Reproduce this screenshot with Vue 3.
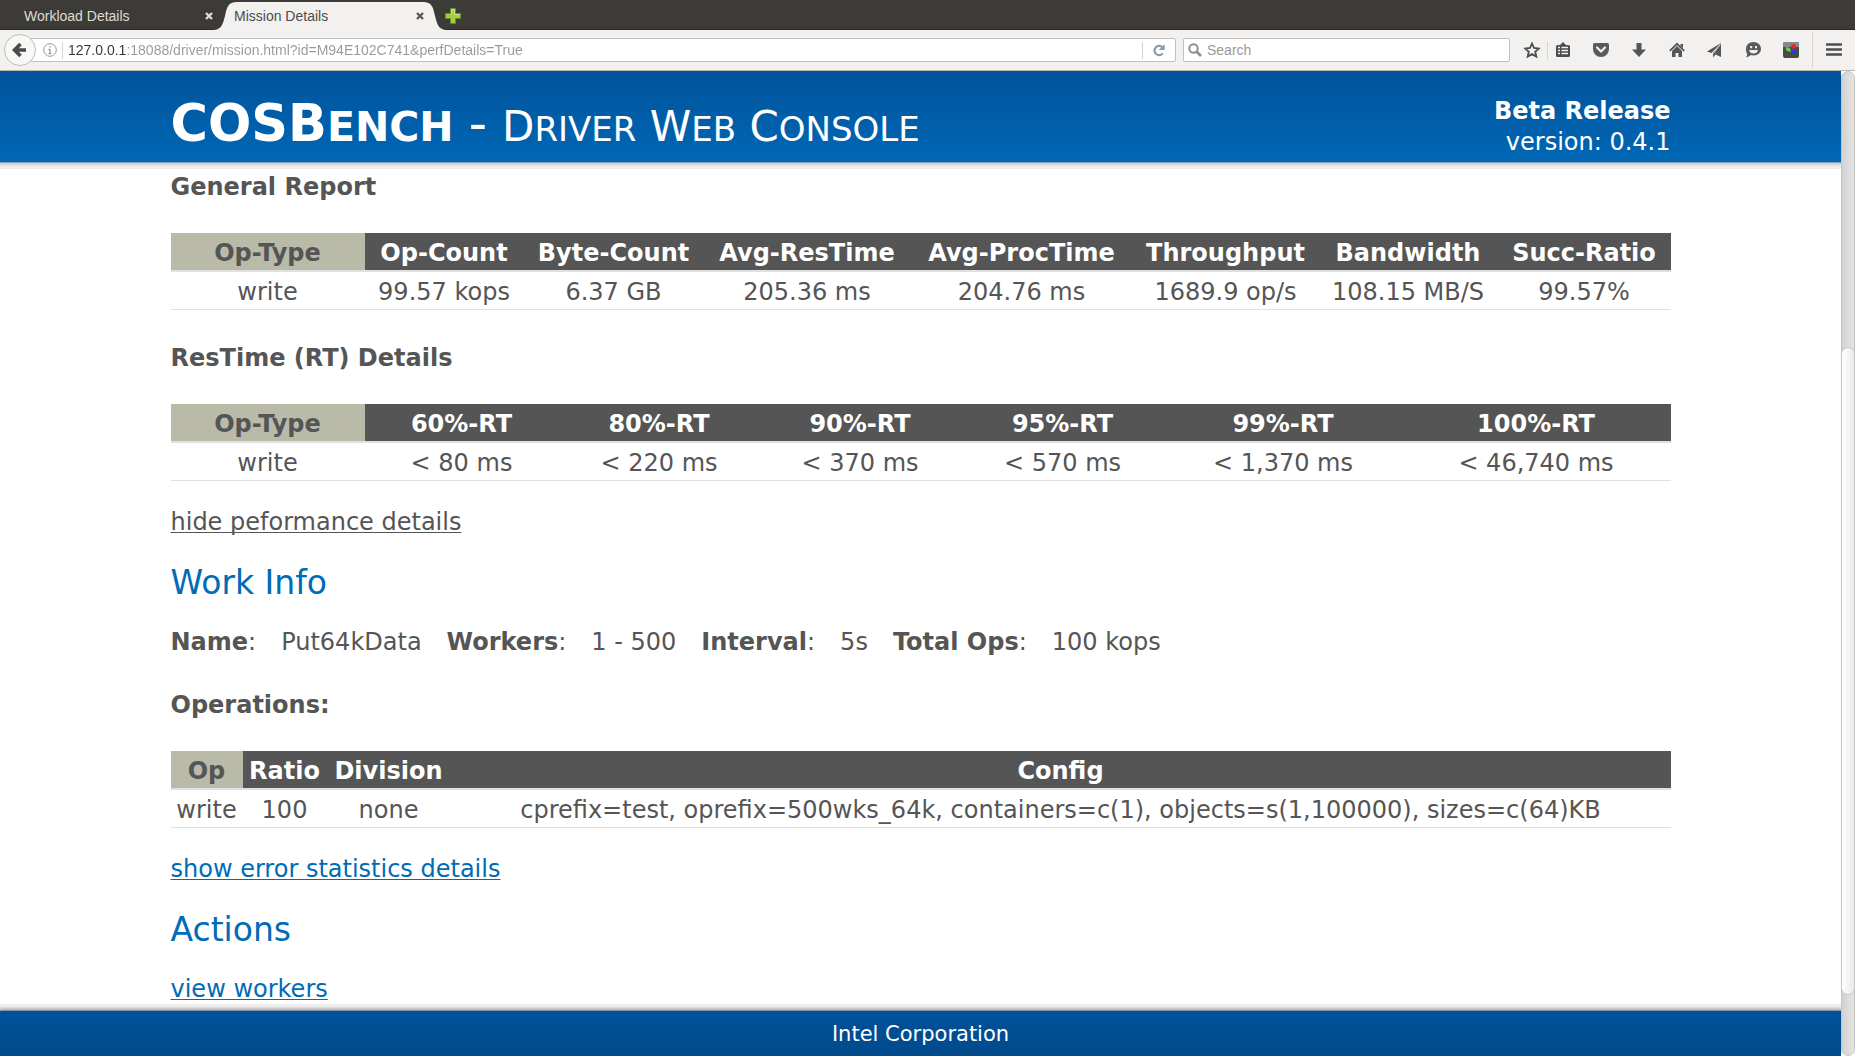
<script setup>
import { ref } from 'vue'

const address = ref('127.0.0.1:18088/driver/mission.html?id=M94E102C741&perfDetails=True')
const query = ref('')

const reports = [
  {
    title: 'General Report',
    widths: [194, 159, 180, 207, 222, 186, 179, 173],
    heads: ['Op-Type', 'Op-Count', 'Byte-Count', 'Avg-ResTime', 'Avg-ProcTime', 'Throughput', 'Bandwidth', 'Succ-Ratio'],
    cells: ['write', '99.57 kops', '6.37 GB', '205.36 ms', '204.76 ms', '1689.9 op/s', '108.15 MB/S', '99.57%'],
  },
  {
    title: 'ResTime (RT) Details',
    widths: [194, 194, 201, 201, 204, 237, 269],
    heads: ['Op-Type', '60%-RT', '80%-RT', '90%-RT', '95%-RT', '99%-RT', '100%-RT'],
    cells: ['write', '< 80 ms', '< 220 ms', '< 370 ms', '< 570 ms', '< 1,370 ms', '< 46,740 ms'],
  },
]

const operations = {
  widths: [72, 84, 124, 1220],
  heads: ['Op', 'Ratio', 'Division', 'Config'],
  cells: ['write', '100', 'none', 'cprefix=test, oprefix=500wks_64k, containers=c(1), objects=s(1,100000), sizes=c(64)KB'],
}

const facts = [
  ['Name', 'Put64kData'],
  ['Workers', '1 - 500'],
  ['Interval', '5s'],
  ['Total Ops', '100 kops'],
]

const share = (w) => ({ width: (w / 15) + '%' })
</script>

<template>
  <div class="window">
    <nav class="tabs" aria-label="Tabs">
      <div class="tab">
        <span class="tab-label">Workload Details</span>
        <button class="close" aria-label="Close tab">
          <svg width="8" height="8" viewBox="0 0 8 8"><path d="M1 1l6 6M7 1l-6 6" stroke="#dfdbd2" stroke-width="2.4" /></svg>
        </button>
      </div>
      <div class="tab active">
        <svg class="tab-shape" width="234" height="28" viewBox="0 0 234 28">
          <path d="M0 28C9 28 10 21 12 14C14 5 15 0 24 0H210C219 0 220 5 222 14C224 21 225 28 234 28Z" fill="#f2f1f0" />
        </svg>
        <span class="tab-label">Mission Details</span>
        <button class="close" aria-label="Close tab">
          <svg width="8" height="8" viewBox="0 0 8 8"><path d="M1 1l6 6M7 1l-6 6" stroke="#5c5b58" stroke-width="2.4" /></svg>
        </button>
      </div>
      <button class="new-tab" aria-label="New tab">
        <svg width="16" height="16" viewBox="0 0 16 16">
          <path d="M5.5 .5h5v5h5v5h-5v5h-5v-5h-5v-5h5z" fill="#a9cc3c" stroke="#5f8f2b" />
          <path d="M6.5 6.5v-5h3v5h5" fill="none" stroke="#d3e590" />
        </svg>
      </button>
    </nav>

    <div class="toolbar">
      <button class="back" aria-label="Back">
        <svg width="16" height="16" viewBox="0 0 16 16"><path d="M8.500 2L2.500 8l6 6M3.500 8H14" fill="none" stroke="#4a4a4a" stroke-width="3.600" /></svg>
      </button>
      <div class="address">
        <svg width="14" height="14" viewBox="0 0 14 14">
          <circle cx="7" cy="7" r="6.300" fill="none" stroke="#999" />
          <path d="M7 3v1.600M7 6v5M5.500 6.500H7M5.500 10.700h3" stroke="#999" stroke-width="1.300" />
        </svg>
        <i class="bar"></i>
        <input v-model="address" class="url" aria-label="Address" spellcheck="false" />
        <i class="bar"></i>
        <button class="reload" aria-label="Reload">
          <svg width="14" height="14" viewBox="0 0 14 14">
            <path d="M10.300 4.200A4.600 4.600 0 1 0 10.700 10.400" fill="none" stroke="#8b9aa8" stroke-width="2.200" />
            <path d="M12.600 1.200V7H6.800z" fill="#8b9aa8" />
          </svg>
        </button>
      </div>
      <div class="search">
        <svg width="14" height="14" viewBox="0 0 14 14">
          <circle cx="5.500" cy="5.500" r="4.200" fill="none" stroke="#8e8e8e" stroke-width="2" />
          <path d="M8.500 8.500l4.500 4.500" stroke="#8e8e8e" stroke-width="2.600" />
        </svg>
        <input v-model="query" aria-label="Search" placeholder="Search" />
      </div>
      <div class="tools">
        <button class="tool narrow" aria-label="Bookmark this page">
          <svg width="16" height="16" viewBox="0 0 16 16"><path d="M8 1.500l2 4.500 4.900.500-3.700 3.300 1.100 4.800L8 12.100l-4.300 2.500 1.100-4.800L1.100 6.500 6 6z" fill="none" stroke="#4d4d4d" stroke-width="1.800" /></svg>
        </button>
        <i class="bar"></i>
        <button class="tool narrow list" aria-label="Bookmarks">
          <svg width="16" height="16" viewBox="0 0 16 16">
            <path d="M1 4.500Q1 3 2.500 3H5l3-3 3 3h2.500Q15 3 15 4.500v9Q15 15 13.500 15h-11Q1 15 1 13.500z" fill="#4d4d4d" />
            <path d="M3 5.500h2M3 8.500h2M3 11.500h2M6.500 5.500H13M6.500 8.500H13M6.500 11.500H13" stroke="#f2f1f0" stroke-width="1.700" />
          </svg>
        </button>
        <button class="tool" aria-label="Pocket">
          <svg width="16" height="16" viewBox="0 0 16 16">
            <path d="M1.500 1h13Q16 1 16 2.500V7A8 8 0 0 1 0 7V2.500Q0 1 1.500 1z" fill="#5a5a5a" />
            <path d="M4 5.500l4 4 4-4" fill="none" stroke="#f2f1f0" stroke-width="2.200" stroke-linecap="round" stroke-linejoin="round" />
          </svg>
        </button>
        <button class="tool" aria-label="Downloads">
          <svg width="16" height="16" viewBox="0 0 16 16"><path d="M5.500 1h5v6.500H15L8 15 1 7.500h4.500z" fill="#555" /></svg>
        </button>
        <button class="tool" aria-label="Home">
          <svg width="16" height="16" viewBox="0 0 16 16">
            <path d="M.8 8.800L8 1.800l7.200 7" fill="none" stroke="#555" stroke-width="1.800" />
            <path d="M11.500 2H14v4l-2.500-2z" fill="#555" />
            <path d="M3 9l5-5 5 5v6H9.500v-4h-3v4H3z" fill="#555" />
          </svg>
        </button>
        <button class="tool" aria-label="Share">
          <svg width="16" height="16" viewBox="0 0 16 16">
            <path d="M14 1L0 9.500l4.500 1.500zM14 1L6 11v4.500l2.500-3L14 15z" fill="#555" />
            <path d="M13.500 2L6.500 11.500" stroke="#f2f1f0" stroke-width=".8" />
          </svg>
        </button>
        <button class="tool" aria-label="Chat">
          <svg width="16" height="16" viewBox="0 0 16 16">
            <path d="M8.500 0C13 0 16 3 16 6.800S13 13.500 8.500 13.500c-1 0-2 0-2.800-.4C4.500 14.500 3 15.200.8 15.200c1.200-1 1.500-2 1.400-3.400C1.200 10.500 1 9 1 7 1 3 4 0 8.500 0z" fill="#5a5a5a" />
            <path d="M5.200 4h2v2.200h-2zM10 4h2v2.200h-2z" fill="#f2f1f0" />
            <path d="M4 8h9Q12 11.500 8.500 11.500T4 8z" fill="#f2f1f0" />
          </svg>
        </button>
        <button class="tool" aria-label="Color add-on">
          <svg width="16" height="16" viewBox="0 0 16 16">
            <rect width="16" height="16" rx="2" fill="#4a4a4a" />
            <path d="M0 2Q0 0 2 0h12q2 0 2 2v3H0z" fill="#888" />
            <path d="M8 3l4-1 1 4-4 1z" fill="#f02020" />
            <path d="M3 5l4 1 1 4-4-1-1-1z" fill="#5ad04a" />
            <path d="M8 8l5-1v5l-4 0z" fill="#1f3cf0" />
          </svg>
        </button>
        <i class="bar tall"></i>
        <button class="tool menu" aria-label="Menu">
          <svg width="16" height="16" viewBox="0 0 16 16"><path d="M1 2.500h14M1 7.500h14M1 12.500h14" stroke="#4d4d4d" stroke-width="2.600" stroke-linecap="round" /></svg>
        </button>
      </div>
    </div>

    <div class="viewport">
      <div class="page">
        <header class="banner">
          <div class="wrap banner-row">
            <h1 class="title">
              <strong>COSB<span class="brand-caps">ENCH</span></strong>
              <span>-</span>
              <span class="sub">D<span class="caps">RIVER</span> W<span class="caps">EB</span> C<span class="caps">ONSOLE</span></span>
            </h1>
            <div class="version">
              <strong>Beta Release</strong><br />version: 0.4.1
            </div>
          </div>
        </header>

        <main class="wrap content">
          <section v-for="r in reports" :key="r.title">
            <h4>{{ r.title }}</h4>
            <table>
              <colgroup><col v-for="(w, i) in r.widths" :key="i" :style="share(w)" /></colgroup>
              <thead><tr><th v-for="h in r.heads" :key="h" scope="col">{{ h }}</th></tr></thead>
              <tbody><tr><td v-for="(c, i) in r.cells" :key="i">{{ c }}</td></tr></tbody>
            </table>
          </section>
          <p class="more"><a href="#" class="visited">hide peformance details</a></p>

          <h3>Work Info</h3>
          <p class="facts">
            <span v-for="[k, v] in facts" :key="k" class="fact"><span><strong>{{ k }}</strong>:</span><span>{{ v }}</span></span>
          </p>
          <h4>Operations:</h4>
          <table>
            <colgroup><col v-for="(w, i) in operations.widths" :key="i" :style="share(w)" /></colgroup>
            <thead><tr><th v-for="h in operations.heads" :key="h" scope="col">{{ h }}</th></tr></thead>
            <tbody><tr><td v-for="(c, i) in operations.cells" :key="i">{{ c }}</td></tr></tbody>
          </table>
          <p class="more"><a href="#">show error statistics details</a></p>

          <h3>Actions</h3>
          <p><a href="#">view workers</a></p>
        </main>

        <footer class="footer">Intel Corporation</footer>
      </div>
      <div class="scrollbar"><div class="thumb"></div></div>
    </div>
  </div>
</template>

<style>
body {
  margin: 0;
  background: #fff;
}
</style>

<style scoped>
.window {
  display: flex;
  flex-direction: column;
  min-height: 100vh;
  font-family: Verdana, "DejaVu Sans", sans-serif;
  font-size: 24px;
  line-height: 30px;
  color: #555;
}
button {
  display: flex;
  align-items: center;
  justify-content: center;
  margin: 0;
  padding: 0;
  border: 0;
  background: none;
}
input {
  min-width: 0;
  flex: 1;
  padding: 0;
  border: 0;
  outline: 0;
  background: none;
  font: 14px/20px "Liberation Sans", Arial, sans-serif;
}
svg {
  display: block;
  flex: none;
}

/* Tab strip */
.tabs {
  display: flex;
  height: 28px;
  padding-top: 2px;
  background: #3c3b37;
  box-shadow: inset 0 -1px #2b2a27;
  font: 14px/28px "Liberation Sans", Arial, sans-serif;
}
.tab {
  position: relative;
  display: flex;
  align-items: center;
  justify-content: space-between;
  box-sizing: border-box;
  width: 213px;
  padding-left: 24px;
  color: #dfdbd2;
}
.tab.active {
  width: 234px;
  padding: 0 23px 0 21px;
  color: #4c4c4c;
}
.tab-shape {
  position: absolute;
  left: 0;
  top: 0;
}
.tab-label,
.close {
  position: relative;
}
.new-tab {
  margin-left: -2px;
}

/* Navigation toolbar */
.toolbar {
  display: flex;
  align-items: center;
  height: 40px;
  border-bottom: 1px solid #bab8b4;
  background: #f2f1f0;
}
.back {
  z-index: 1;
  box-sizing: border-box;
  width: 32px;
  height: 32px;
  margin-left: 4px;
  border: 1px solid #bfbcb8;
  border-radius: 50%;
  background: #f8f8f7;
}
.address,
.search {
  display: flex;
  align-items: center;
  box-sizing: border-box;
  height: 24px;
  border: 1px solid #c4c0bb;
  border-radius: 2px;
  background: #fff;
}
.address {
  flex: 1;
  margin-left: -6px;
  padding-left: 12px;
}
.bar {
  width: 1px;
  height: 17px;
  margin: 0 5px;
  background: #d5d3d0;
}
.url {
  background: linear-gradient(90deg, #333 59px, #999 59px);
  -webkit-background-clip: text;
  background-clip: text;
  color: transparent;
}
.reload {
  width: 22px;
  margin-right: 5px;
}
.search {
  width: 327px;
  margin-left: 7px;
  padding-left: 4px;
  gap: 5px;
}
.search input::placeholder {
  color: #999;
  opacity: 1;
}
.tools {
  display: flex;
  align-items: center;
  margin-left: 7px;
}
.tools .bar {
  margin: 0;
}
.tools .tall {
  height: 36px;
  margin-left: 2px;
}
.tool {
  width: 38px;
  height: 30px;
}
.tool.narrow {
  width: 30px;
}
.tool.list {
  margin-right: 4px;
}
.tool.menu {
  width: 42px;
}

/* Page */
.viewport {
  display: flex;
  flex: 1;
}
.page {
  display: flex;
  flex: 1;
  flex-direction: column;
  min-width: 0;
}
.wrap {
  box-sizing: border-box;
  width: 100%;
  max-width: 1500px;
  margin: 0 auto;
}
.banner {
  padding: 25px 0 4px;
  background: linear-gradient(#00539b, #0067b5);
  box-shadow: 0 1px #7f9fbc, 0 3px 2px #ccc, 0 7px #eee;
  color: #fff;
}
.banner-row {
  display: flex;
  justify-content: space-between;
}
.title {
  display: flex;
  align-items: baseline;
  gap: 15px;
  margin: 0;
  font-size: 51px;
  font-weight: 400;
  line-height: 56px;
}
.brand-caps {
  font-size: 41px;
}
.sub {
  font-size: 42px;
}
.caps {
  font-size: 34px;
}
.version {
  line-height: 31px;
  text-align: right;
}
.content {
  padding: 10px 0 7px;
}
h4 {
  margin: 33px 0 31px;
  font-size: 24px;
  line-height: 30px;
}
section:first-child h4 {
  margin-top: 0;
}
h3 {
  margin: 26px 0 24px;
  color: #006bb6;
  font-size: 33px;
  font-weight: 400;
  line-height: 40px;
}
p {
  margin: 0;
}
.more {
  margin-top: 26px;
}
a {
  color: #006bb6;
  text-decoration: underline 1px;
  text-decoration-skip-ink: none;
  text-underline-offset: 2px;
}
a.visited {
  color: #555;
}
.facts,
.fact {
  display: flex;
  gap: 25px;
}
table {
  width: 100%;
  border-spacing: 0;
  table-layout: fixed;
}
th,
td {
  padding: 5px 0 2px;
  text-align: center;
  white-space: nowrap;
}
th {
  border-bottom: 2px solid #e0e0e0;
  background: #555;
  background-clip: padding-box;
  color: #fff;
}
th:first-child {
  background-color: #b9baa8;
  color: #555;
}
td {
  border-bottom: 1px solid #e0e0e0;
}
.footer {
  margin-top: auto;
  padding: 8px 0 7px;
  background: linear-gradient(#00529b, #004a8a);
  box-shadow: 0 -1px #8296a8, 0 -3px 2px #bbb, 0 -7px #eee;
  color: #fff;
  font-size: 21px;
  text-align: center;
}

/* Scrollbar */
.scrollbar {
  display: grid;
  grid-template-rows: 277fr 647fr 61fr;
  box-sizing: border-box;
  width: 14px;
  border: 1px solid #c6c4c1;
  border-radius: 7px;
  background: linear-gradient(90deg, #d2d2d2, #e4e4e4);
}
.thumb {
  grid-row: 2;
  border-radius: 6px;
  background: linear-gradient(90deg, #fff, #ebe9e7);
  box-shadow: 0 0 1px 1px #c9c7c4;
}
</style>
